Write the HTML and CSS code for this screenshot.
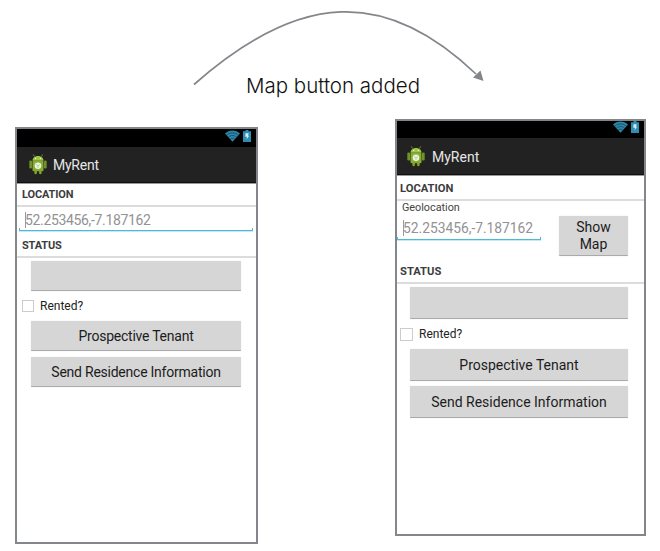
FILE: index.html
```html
<!DOCTYPE html>
<html lang="en">
<head>
<meta charset="utf-8">
<title>MyRent</title>
<link rel="stylesheet" href="styles.css">
</head>
<body>
<svg class="defs" width="0" height="0" aria-hidden="true">
  <symbol id="wifi" viewBox="0 0 15 12">
    <path d="M0 3.4C4.2-.5 10.800-.5 15 3.400L7.500 11.700z" fill="#2c86aa"/>
    <path d="M1.700 5C5 2.200 10 2.200 13.300 5M3.500 7C6 5 9 5 11.500 7M5.300 9C6.700 8 8.300 8 9.700 9" fill="none" stroke="#10303d" stroke-width=".6"/>
  </symbol>
  <symbol id="battery" viewBox="0 0 8 12">
    <path d="M2.500 0h3v1.200H8V12H0V1.200h2.500z" fill="#2d8db3"/>
    <path d="M2.500 3.200h3.200L5 5.800h1.200L3.500 9.500 4 6.800H2.300z" fill="#d5edf5"/>
  </symbol>
  <symbol id="droid" viewBox="0 0 18 21">
    <path d="M5.500 2.500 4.300.5M12.500 2.500 13.700.5" stroke="#87a935" stroke-width=".8"/>
    <path d="M3.500 6.800C3.500 .500 14.500 .500 14.500 6.800z" fill="#9fc544"/>
    <rect x="3.500" y="6.800" width="11" height="10.400" rx="1.200" fill="#86ad31"/>
    <rect x=".3" y="6.500" width="2.800" height="8" rx="1.200" fill="#6f932a"/>
    <rect x="14.900" y="6.500" width="2.800" height="8" rx="1.200" fill="#6f932a"/>
    <path d="M5.400 16h2.500v3.500q-1.250 1.500-2.500 0zM10.100 16h2.500v3.500q-1.250 1.500-2.500 0z" fill="#7ea52e"/>
    <circle cx="6.600" cy="4.300" r=".6" fill="#fff"/><circle cx="11.400" cy="4.300" r=".6" fill="#fff"/>
    <circle cx="9" cy="11.700" r="3.300" fill="#edf3de"/>
    <path d="M7 10.500 9 11.700l2-1.200M9 11.700V14" fill="none" stroke="#a9c178" stroke-width=".7"/>
  </symbol>
</svg>
<header class="intro">
  <svg class="arrow" width="660" height="120" viewBox="0 0 660 120">
    <path d="M194 84.500C300-9 386-12 476 74" fill="none" stroke="#83868a" stroke-width="1.700"/>
    <path d="M483.500 81 473 77.500 480.500 70.500z" fill="#83868a"/>
  </svg>
  <h1 class="caption">Map button added</h1>
</header>
<main class="phones">
  <section class="phone before">
    <div class="statusbar"><svg class="wifi"><use href="#wifi"/></svg><svg class="battery"><use href="#battery"/></svg></div>
    <div class="appbar"><svg class="droid"><use href="#droid"/></svg><span class="title">MyRent</span></div>
    <h2 class="heading location">LOCATION</h2>
    <div class="field"><span class="value">52.253456,-7.187162</span></div>
    <h2 class="heading status">STATUS</h2>
    <div class="form">
      <div class="button"></div>
      <div class="check"><i class="box"></i><span class="label">Rented?</span></div>
      <div class="button"><span>Prospective Tenant</span></div>
      <div class="button"><span>Send Residence Information</span></div>
    </div>
  </section>
  <section class="phone after">
    <div class="statusbar"><svg class="wifi"><use href="#wifi"/></svg><svg class="battery"><use href="#battery"/></svg></div>
    <div class="appbar"><svg class="droid"><use href="#droid"/></svg><span class="title">MyRent</span></div>
    <h2 class="heading location">LOCATION</h2>
    <div class="georow">
      <div class="geo">
        <div class="geolabel">Geolocation</div>
        <div class="field"><span class="value">52.253456,-7.187162</span></div>
      </div>
      <div class="button map">Show<br>Map</div>
    </div>
    <h2 class="heading status">STATUS</h2>
    <div class="form">
      <div class="button"></div>
      <div class="check"><i class="box"></i><span class="label">Rented?</span></div>
      <div class="button"><span>Prospective Tenant</span></div>
      <div class="button"><span>Send Residence Information</span></div>
    </div>
  </section>
</main>
</body>
</html>
```
FILE: styles.css
```css
* { box-sizing: border-box; }
body { margin: 0; width: 660px; height: 551px; overflow: hidden; background: #fff; font-family: Roboto, sans-serif; }
.defs { position: absolute; }
.intro { height: 119px; position: relative; padding-top: 73px; }
.arrow { position: absolute; left: 0; top: 0; }
.caption { margin: 0 0 0 246px; font: 300 20.500px/26px Inter, sans-serif; color: #111; white-space: nowrap; }
.phones { display: flex; align-items: flex-start; padding-left: 15px; gap: 137px; }
.phone { height: 417px; border: 2px solid #83868b; white-space: nowrap; }
.before { width: 243px; margin-top: 8px; }
.after { width: 251px; }
.statusbar { height: 18px; background: #000; display: flex; justify-content: flex-end; align-items: flex-start; gap: 3px; padding: 1px 5px 0 0; }
.wifi { width: 15px; height: 12px; }
.battery { width: 8px; height: 12px; }
.appbar { height: 36px; background: #222; border-bottom: 1px solid #101010; box-shadow: 0 1px #999; display: flex; align-items: center; gap: 6px; padding-left: 12px; color: #e6e6e6; font-size: 14px; letter-spacing: -.25px; }
.droid { width: 18px; height: 21px; }
.heading { margin: 0; padding-left: 5px; border-bottom: 2px solid #dcdcdc; color: #3c3c3c; font-size: 11px; letter-spacing: -.15px; font-weight: 700; display: flex; align-items: center; }
.before .location { height: 24px; padding-top: 1px; }
.before .status { height: 27px; padding-top: 4px; }
.field { height: 23px; margin: 1px 3px 0 2px; padding: 3px 0 0 5px; border: 1px solid #4bb8dc; border-top: 0; border-image: linear-gradient(transparent 88%, #4bb8dc 88%) 1; box-shadow: 0 1px #c5e8f4; color: #929292; font-size: 14px; letter-spacing: -.34px; line-height: 18px; }
.value { display: block; width: max-content; background: linear-gradient(#999, #999) left center / 1px 16px no-repeat; }
.form { padding: 3px 15px 0 14px; }
.button { height: 30px; background: #d6d6d6; border-bottom: 1px solid #aaa; border-radius: 1px; box-shadow: 0 0 1px #ccc; color: #1c1c1c; font-size: 14px; letter-spacing: -.24px; display: flex; align-items: center; justify-content: center; }
.button + .button { margin-top: 6px; }
.check { height: 30px; margin-left: -9px; display: flex; align-items: center; gap: 6px; color: #222; font-size: 12px; }
.box { width: 12px; height: 12px; border: 1px solid #ccc; }

.after .statusbar { height: 17px; padding-top: 0; }
.after .appbar { height: 37px; padding: 1px 0 0 10px; gap: 7px; letter-spacing: 0; }
.after .heading { padding-left: 3px; font-size: 11.200px; letter-spacing: 0; }
.after .location { height: 26px; padding-top: 2px; }
.after .status { height: 28px; padding-top: 5px; }
.georow { height: 55px; display: flex; justify-content: space-between; padding-right: 16px; }
.geo { width: 144px; }
.geolabel { height: 13px; padding-left: 5px; font-size: 10.800px; line-height: 14px; color: #444; }
.after .field { height: 25px; margin: 1px 0 0; padding-top: 4px; font-size: 13.800px; letter-spacing: 0; }
.after .map { width: 69px; height: 40px; margin-top: 15px; line-height: 17px; text-align: center; }
.after .form { padding: 3px 16px 0 13px; }
.after .button { letter-spacing: 0; }
.after .form .button { height: 32px; }
.after .form .button + .button { margin-top: 5px; }
.after .check { margin-left: -10px; }
.after .box { width: 13px; height: 13px; }
```
